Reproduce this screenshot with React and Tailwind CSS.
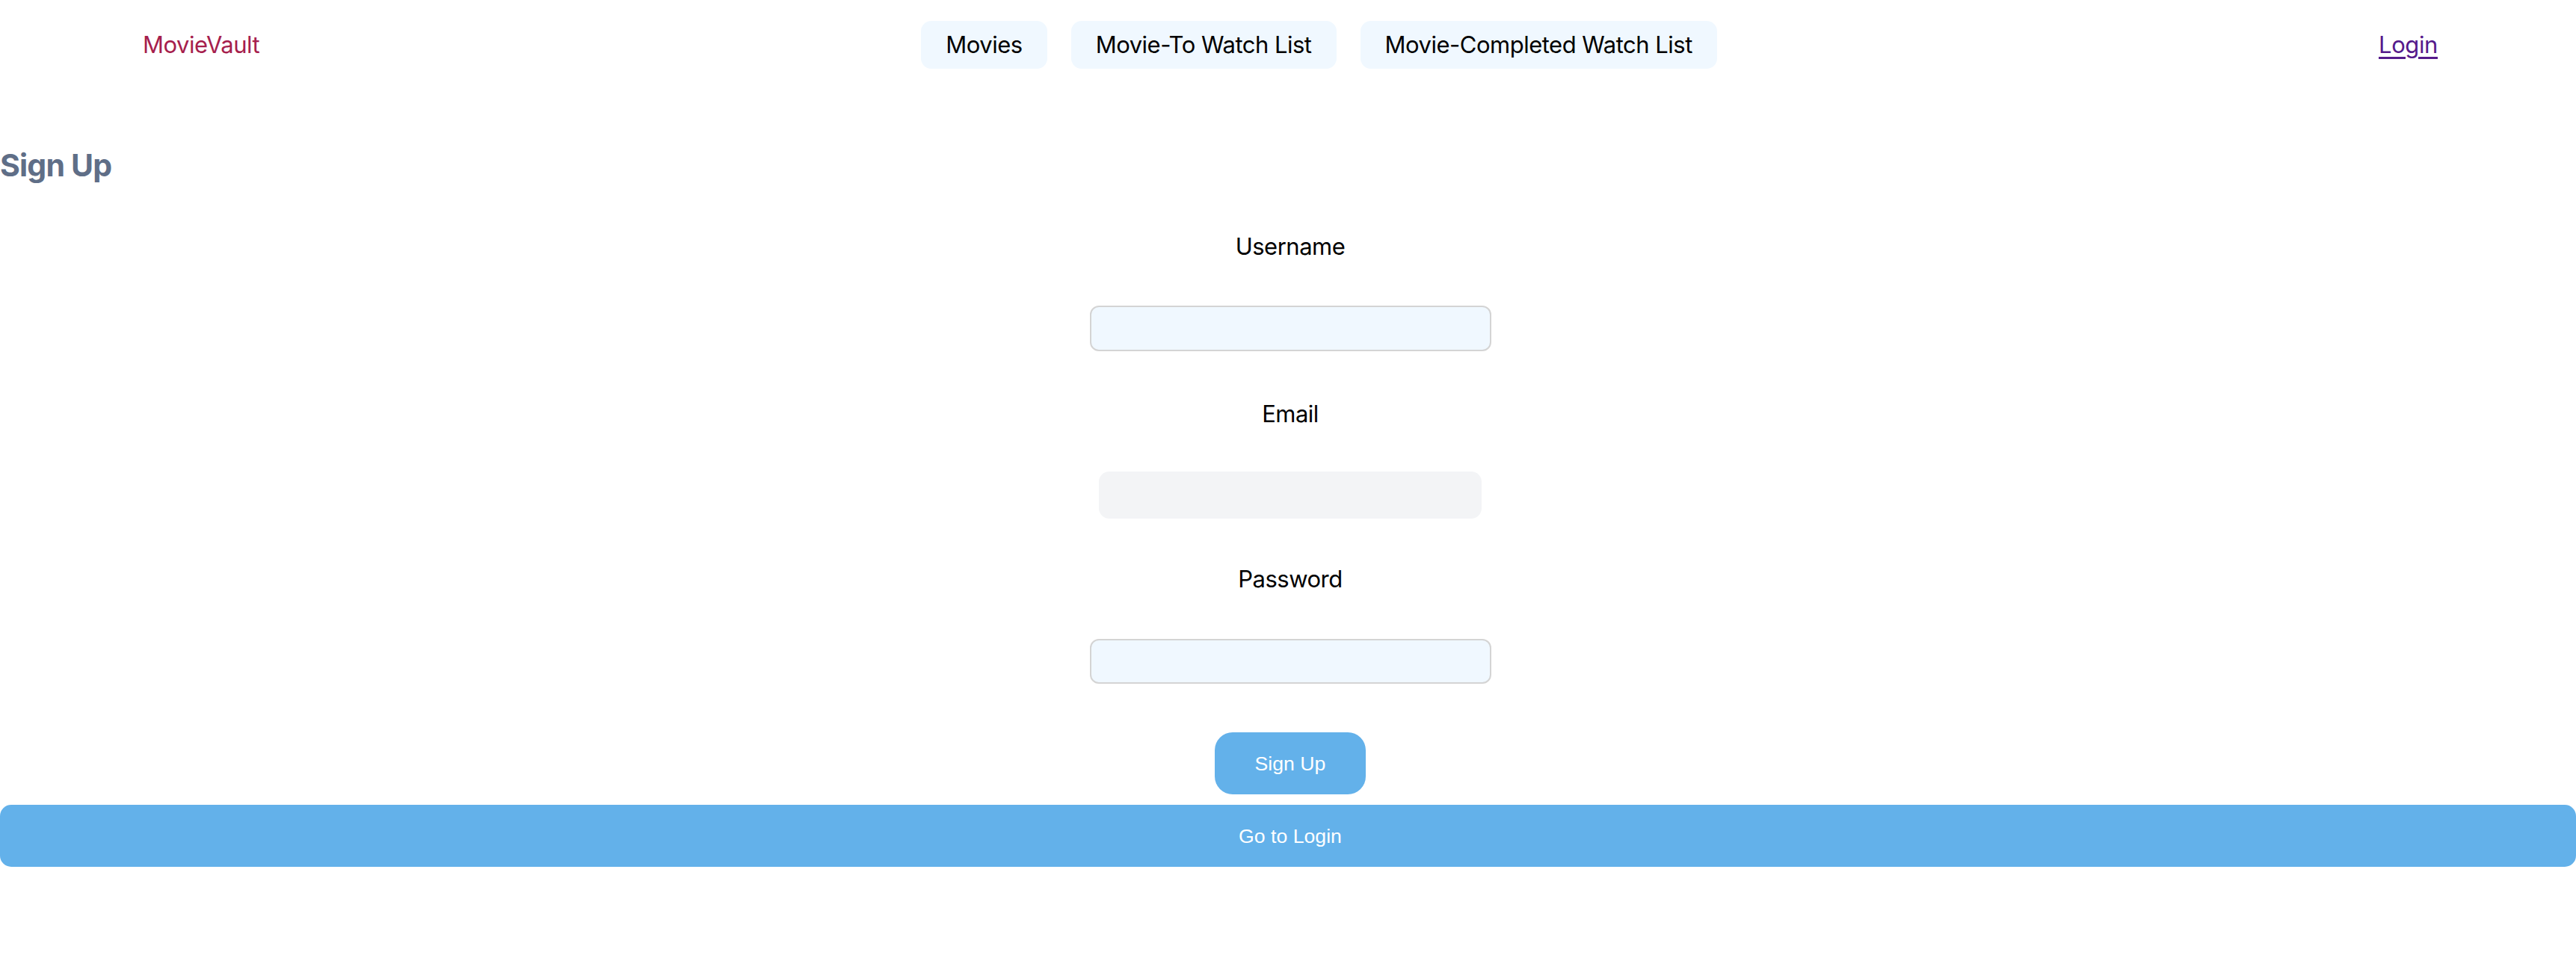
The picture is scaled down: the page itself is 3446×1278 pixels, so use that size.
export default function App() {
  const navBtn =
    "h-[64px] px-[33px] rounded-[14px] bg-[#f0f8ff] text-black text-[31px] tracking-[-0.5px] flex items-center";
  return (
    <div className="min-h-screen w-full bg-white font-['Inter',sans-serif]">
      <header className="flex items-center justify-between h-[120px] pl-[191px] pr-[185px]">
        <span className="text-[31px] tracking-[-0.5px] text-[#a61e4d]">MovieVault</span>
        <nav className="flex items-center gap-[32px]">
          <span className={navBtn}>Movies</span>
          <span className={navBtn}>Movie-To Watch List</span>
          <span className={navBtn}>Movie-Completed Watch List</span>
        </nav>
        <a href="#" className="text-[31px] tracking-[-0.4px] text-[#551a8b] underline underline-offset-[5px]">
          Login
        </a>
      </header>

      <h2 className="mt-[76px] text-[41px] leading-[50px] font-bold tracking-[-0.8px] text-[#5f6e87]">Sign Up</h2>

      <div className="flex flex-col items-center pl-[6px]">
        <label className="mt-[60px] text-[31px] tracking-[-0.5px] leading-[48px] text-black">Username</label>
        <input
          type="text"
          className="mt-[55px] w-[537px] h-[61px] rounded-[12px] border-2 border-[#d4d4d4] bg-[#f0f8ff] outline-none"
        />
        <label className="mt-[60px] text-[31px] tracking-[-0.5px] leading-[48px] text-black">Email</label>
        <input
          type="email"
          className="mt-[53px] w-[512px] h-[63px] rounded-[14px] bg-[#f3f4f6] outline-none"
        />
        <label className="mt-[57px] text-[31px] tracking-[-0.5px] leading-[48px] text-black">Password</label>
        <input
          type="password"
          className="mt-[56px] w-[537px] h-[60px] rounded-[12px] border-2 border-[#d4d4d4] bg-[#f0f8ff] outline-none"
        />
        <button className="mt-[65px] w-[202px] h-[83px] rounded-[24px] bg-[#63b1ea] text-white text-[26.67px] font-['Liberation_Sans',Arial,sans-serif]">
          Sign Up
        </button>
      </div>
      <button className="mt-[14px] w-full h-[83px] rounded-[15px] bg-[#63b1ea] text-white text-[26.67px] font-['Liberation_Sans',Arial,sans-serif] pl-[6px]">
        Go to Login
      </button>
    </div>
  );
}
